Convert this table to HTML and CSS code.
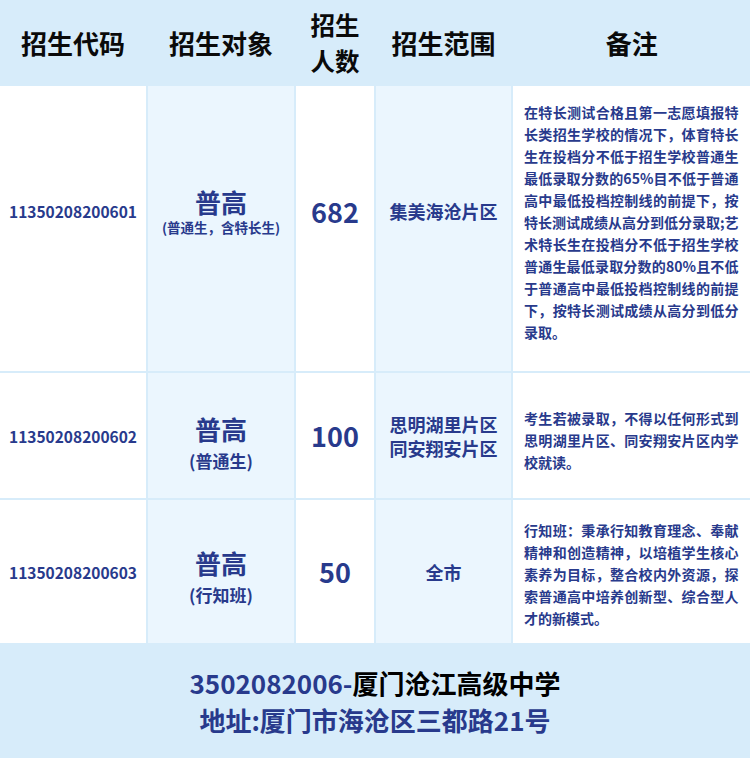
FILE: index.html
```html
<!DOCTYPE html>
<html lang="zh-CN">
<head>
<meta charset="utf-8">
<title>招生计划</title>
<link rel="stylesheet" href="styles.css">
</head>
<body>
<div class="table">
  <div class="th">招生代码</div>
  <div class="th">招生对象</div>
  <div class="th th-two"><span class="hl">招生</span><span class="hl">人数</span></div>
  <div class="th">招生范围</div>
  <div class="th">备注</div>

  <div class="td code r1">11350208200601</div>
  <div class="td target alt r1"><span class="big">普高</span><span class="sub sub-sm">(普通生，含特长生)</span></div>
  <div class="td num r1">682</div>
  <div class="td area alt r1">集美海沧片区</div>
  <div class="td note note1">
    <span class="ln">在特长测试合格且第一志愿填报特</span>
    <span class="ln">长类招生学校的情况下，体育特长</span>
    <span class="ln">生在投档分不低于招生学校普通生</span>
    <span class="ln">最低录取分数的65%目不低于普通</span>
    <span class="ln">高中最低投档控制线的前提下，按</span>
    <span class="ln">特长测试成绩从高分到低分录取;艺</span>
    <span class="ln">术特长生在投档分不低于招生学校</span>
    <span class="ln">普通生最低录取分数的80%且不低</span>
    <span class="ln">于普通高中最低投档控制线的前提</span>
    <span class="ln">下，按特长测试成绩从高分到低分</span>
    <span class="ln last">录取。</span>
  </div>

  <div class="td code">11350208200602</div>
  <div class="td target alt r2"><span class="big">普高</span><span class="sub">(普通生)</span></div>
  <div class="td num">100</div>
  <div class="td area alt">思明湖里片区<br>同安翔安片区</div>
  <div class="td note note2">
    <span class="ln">考生若被录取，不得以任何形式到</span>
    <span class="ln">思明湖里片区、同安翔安片区内学</span>
    <span class="ln last">校就读。</span>
  </div>

  <div class="td code">11350208200603</div>
  <div class="td target alt r3"><span class="big">普高</span><span class="sub">(行知班)</span></div>
  <div class="td num">50</div>
  <div class="td area alt">全市</div>
  <div class="td note note3">
    <span class="ln">行知班：秉承行知教育理念、奉献</span>
    <span class="ln">精神和创造精神，以培植学生核心</span>
    <span class="ln">素养为目标，整合校内外资源，探</span>
    <span class="ln">索普通高中培养创新型、综合型人</span>
    <span class="ln last">才的新模式。</span>
  </div>
</div>
<div class="footer">
  <div class="fline"><span class="blue">3502082006-</span><span class="black">厦门沧江高级中学</span></div>
  <div class="fline blue">地址:厦门市海沧区三都路21号</div>
</div>
</body>
</html>
```

FILE: styles.css
```css
* { box-sizing: border-box; }
html, body {
  margin: 0;
  padding: 0;
  width: 750px;
  height: 760px;
  overflow: hidden;
  background: #ffffff;
  font-family: "Noto Sans CJK SC", "Noto Sans", sans-serif;
}
.table {
  display: grid;
  grid-template-columns: 146px 146px 78px 135px 1fr;
  grid-template-rows: 84px 285px 125px 143px;
  gap: 2px;
  background: #d7ecfa;
  padding-bottom: 2px;
}
.th {
  display: flex;
  flex-direction: column;
  align-items: center;
  justify-content: center;
  text-align: center;
  font-size: 26px;
  font-weight: 700;
  color: #0a0a0a;
  line-height: 33px;
}
.th-two {
  font-size: 24.5px;
  line-height: 36px;
  padding-top: 2px;
}
.hl { display: block; }
.td {
  background: #ffffff;
  display: flex;
  flex-direction: column;
  align-items: center;
  justify-content: center;
  text-align: center;
  color: #283a8c;
}
.td.alt { background: #ebf6fe; }
.td.r1 { padding-bottom: 35px; }
.td.r2 { padding-top: 14px; }
.td.r3 { padding-top: 10px; }
.code {
  font-size: 15.5px;
  font-weight: 600;
}
.big {
  font-size: 26px;
  font-weight: 700;
  line-height: 32px;
}
.sub {
  font-size: 17px;
  font-weight: 700;
  line-height: 24px;
  margin-top: 4px;
}
.sub.sub-sm {
  font-size: 13.5px;
  line-height: 18px;
  margin-top: 0;
}
.num {
  font-size: 27px;
  font-weight: 700;
}
.area {
  font-size: 18px;
  font-weight: 700;
  line-height: 24px;
}
.note {
  justify-content: flex-start;
  align-items: stretch;
  padding: 0 12px 0 11px;
  font-size: 14px;
  font-weight: 700;
  line-height: 22px;
}
.note1 { padding-top: 15px; }
.note2 { padding-top: 34px; }
.note3 { padding-top: 19px; }
.ln {
  display: block;
  text-align: justify;
  text-align-last: justify;
  white-space: nowrap;
}
.ln.last { text-align-last: left; text-align: left; }
.footer {
  height: 115px;
  background: #d7ecfa;
  display: flex;
  flex-direction: column;
  align-items: center;
  justify-content: center;
  font-size: 26px;
  font-weight: 700;
  line-height: 37px;
  margin-top: -2px;
}
.blue { color: #283a8c; }
.black { color: #000000; }
```
